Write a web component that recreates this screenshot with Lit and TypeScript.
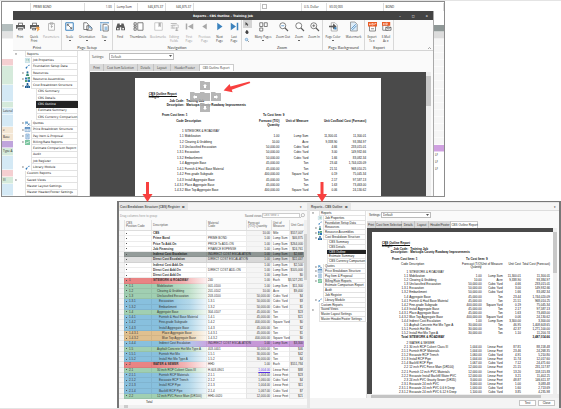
import { LitElement, html, css, svg, nothing } from "lit";
import { customElement, property } from "lit/decorators.js";
import { classMap } from "lit/directives/class-map.js";

const base = css`
  * { box-sizing: border-box; }
  button, select, input {
    appearance: none; border: 0; margin: 0; padding: 0; background: none;
    font: inherit; color: inherit; border-radius: 0; min-width: 0;
  }
  svg { display: block; overflow: visible; }
`;

/* ---------- icons ---------- */
const G = "#5a5a5a";
const B = "#3b82bd";
const icons: Record<string, unknown> = {
  print: svg`<path d="M3 1h6v3H3z M0 4h12v5H10V7H2v2H0z M3 8h6v3H3z" fill=${G}/><path d="M4 2h4v2H4z M4 9h4v1H4z" fill="#fff"/>`,
  quick: svg`<path d="M3 1h6v3H3z M0 4h12v5H10V7H2v2H0z M3 8h5v3H3z" fill=${G}/><path d="M4 2h4v2H4z M4 9h3v1H4z" fill="#fff"/><path d="M9 6l4 1-1 2 1 1-4 3 1-3-2-1z" fill="#f0a04b"/>`,
  params: svg`<path d="M2 2h8v9H2z M4 1h4v2H4z" fill="none" stroke="#aaa"/><path d="M6 4v4M5 6h3" stroke="#aaa"/>`,
  scale: svg`<path d="M1 1h10v10H1z" fill="#fff" stroke=${B} stroke-width="1.3"/><path d="M3 3l6 6M3 3h2.5M3 3v2.5M9 9H6.500M9 9V6.500" stroke=${G} fill="none"/>`,
  orient: svg`<path d="M1 1h4l2 2v7H1z M5 5h4l3 3v3H5z" fill="#fff" stroke=${G}/><path d="M9 5v3h3" fill="none" stroke=${B}/>`,
  size: svg`<path d="M1 1h10M1 0v2M11 0v2M1 3v8M0 11h2" stroke=${B}/><path d="M4 3h5l2 2v7H4z" fill="#fff" stroke=${G}/><path d="M6 6h4v5H6z" fill="#9cc3e2"/>`,
  find: svg`<path d="M2 2h3v2h2V2h3l2 6v3H7V7H5v4H0V8z" fill=${G}/><path d="M1.500 8h2v2h-2z M8.500 8h2v2h-2z" fill="#fff"/>`,
  thumbs: svg`<path d="M0 1h3v3H0z M0 5h3v2H0z M0 8h3v3H0z" fill="none" stroke=${G}/><path d="M5 1h7v10H5z" fill="#fff" stroke=${G}/>`,
  marks: svg`<path d="M1 1h10v10H1z" fill="#fff" stroke="#bbb"/><path d="M6 1h3v6L7.500 5.500 6 7z" fill="#aaa"/>`,
  fields: svg`<path d="M1 2h8M1 5h6M1 8h5" stroke="#aaa"/><path d="M3 4h8v4H3z" fill="none" stroke="#bbb"/><path d="M9 7v5M7 11h4" stroke="#999"/>`,
  first: svg`<path d="M2 2v8" stroke="#aaa" stroke-width="2"/><path d="M11 2v8L4 6z" fill="#aaa"/>`,
  prev: svg`<path d="M9 2v8L3 6z" fill="#a6a6a6"/>`,
  next: svg`<path d="M3 1v10l7-5z" fill=${B}/>`,
  last: svg`<path d="M1 1v10l7-5z M9 1h2v10H9z" fill=${B}/>`,
  pages: svg`<path d="M1 1h4v5H1z M7 1h4v5H7z M1 8h4v4H1z" fill="#fff" stroke=${G}/>`,
  zout: svg`<circle cx="5" cy="5" r="4" fill="#fff" stroke=${G}/><path d="M8 8l4 4" stroke=${G} stroke-width="1.500"/><path d="M3 5h4" stroke=${B}/>`,
  zoom: svg`<circle cx="5" cy="5" r="4" fill="#fff" stroke=${G}/><path d="M8 8l4 4" stroke=${G} stroke-width="1.500"/>`,
  zin: svg`<circle cx="5" cy="5" r="4" fill="#fff" stroke=${G}/><path d="M8 8l4 4" stroke=${G} stroke-width="1.500"/><path d="M3 5h4M5 3v4" stroke=${G}/>`,
  color: svg`<path d="M3 1h5l3 3v8H3z" fill="#fff" stroke="#999"/><path d="M0 5h5l1-3 4 4-4 4-1-3H0z" fill=${G}/><path d="M7 7h3v3H7z" fill=${B}/>`,
  water: svg`<path d="M2 0h6l3 3v9H2z" fill="#dcebf7" stroke="#888"/><path d="M3 9l6-6M4 11l6-6" stroke=${B}/>`,
  pdf: svg`<path d="M2 4h8v8H2z" fill="#fff" stroke="#666"/><path d="M0 0h12v6H0z" fill="#ea5b24"/><path d="M2 2v2h1V2M5 2v2h2V2zM9 4V2h2" fill="none" stroke="#fff" stroke-width=".8"/><path d="M4 9h4" stroke="#666"/>`,
  mail: svg`<path d="M1 4h7v7H1z" fill="#fff" stroke="#666"/><path d="M0 0h11v5H0z" fill="#ea5b24"/><path d="M2 1.500v2h1v-2M5 1.500v2h2v-2z" fill="none" stroke="#fff" stroke-width=".8"/><path d="M5 7h7v4H5z" fill="#fff" stroke=${G}/><path d="M5 7l3.500 2L12 7" fill="none" stroke=${G}/>`,
  job: svg`<path d="M1 1h10v10H1z" fill="#fff" stroke="#7ab5c8"/><path d="M3 4h2M6 4h4M3 7h2M6 7h4" stroke="#46917d" stroke-width="1.500"/>`,
  tool: svg`<path d="M1 9l3-3 2 2-3 4z M8 3l2-2 1 3-2 1z" fill="#2f77b8"/><path d="M4 8l5-5" stroke="#2f77b8"/>`,
  person: svg`<circle cx="6" cy="3" r="2.500" fill="#2b6f9f"/><path d="M2 12l2-6h4l2 6z" fill="#3c8c7a"/>`,
  boxes: svg`<path d="M0 1h5v5H0z M6 6h6v6H6z" fill="#2f77b8"/><path d="M6 0h6v5H6z M0 7h5v5H0z" fill="#55a077"/>`,
  org: svg`<path d="M4 0h4v5H4z M0 7h4v5H0z M4.500 7h3v5h-3z M8 7h4v5H8z" fill="#1f5e95"/><path d="M2 6h8" stroke="#1f5e95" stroke-width="1.500"/>`,
  quote: svg`<path d="M0 1h7v5H4L1 9z" fill="#6fa5cf"/><path d="M6 5l6 6M6 11l5-5" stroke="#1f5e95" stroke-width="1.500"/>`,
  grid: svg`<path d="M0 1h12v10H0z" fill="#fff" stroke="#2f6fae"/><path d="M0 1h12v3H0z" fill="#2f6fae"/><path d="M4 4v7M8 4v7M0 7h12" stroke="#7ba7d0"/>`,
  doc: svg`<path d="M2 0h8v12H2z" fill="#d6e6f5" stroke="#2f6fae"/><path d="M4 4h4M4 7h4" stroke="#2f6fae"/>`,
  bill: svg`<path d="M0 0h12v12H0z" fill="#7cc5a0"/><path d="M2 9l3-4 2 2 4-5" stroke="#fff" fill="none" stroke-width="1.500"/>`,
};
const icon = (n: string) => html`<svg class="ico" viewBox="0 0 12 12" aria-hidden="true">${icons[n]}</svg>`;

/* ---------- report tree ---------- */
type Node = [label: string, level: number, icon?: string, mark?: string];
const nodes: Node[] = [
  ["Reports", 0, "", "open"],
  ["Job Properties", 1, "job"],
  ["Foundation Setup Data", 1, "tool"],
  ["Resources", 1, "person", "closed"],
  ["Resource Assemblies", 1, "boxes", "closed"],
  ["Cost Breakdown Structure", 1, "org", "open"],
  ["CBS Summary", 2],
  ["CBS Details", 2],
  ["CBS Outline", 2],
  ["Estimate Summary", 2],
  ["CBS Currency Comparison", 2],
  ["Quotes", 1, "quote", "closed"],
  ["Price Breakdown Structure", 1, "grid", "closed"],
  ["Pay Item & Proposal", 1, "doc", "closed"],
  ["Billing/Rate Reports", 1, "bill", "closed"],
  ["Estimate Comparison Report", 1],
  ["Audit", 1],
  ["Job Register", 1],
  ["Library Module", 1, "tool", "closed"],
  ["Custom Reports", 0],
  ["Saved Views", 0, "", "closed"],
  ["Master Layout Settings", 0],
  ["Master Header/Footer Settings", 0],
];

@customElement("report-tree")
export class ReportTree extends LitElement {
  static styles = [base, css`
    :host { display: flex; flex-direction: column; min-height: 0; background: #fff; padding-right: var(--tree-end); }
    .row { flex: 1 1 0; min-height: 0; display: flex; align-items: stretch; text-align: left; width: 100%; }
    .gutter { flex: none; display: flex; align-items: center; justify-content: flex-end; gap: 1px; padding-right: 1px; }
    .l0 { width: var(--l0); justify-content: flex-start; padding-left: 2px; }
    .l1 { width: var(--l1); }
    .l2 { width: var(--l2); }
    .ico { width: var(--tree-icon); height: var(--tree-icon); }
    .mark { width: 2px; height: 2px; }
    .label { flex: 1; display: flex; align-items: center; padding-left: 1px; border: solid #e2e2e2; border-width: 0 1px 1px; line-height: 4px; white-space: nowrap; }
    .on { background: #222; color: #fff; border-color: #222; }
  `];
  render() {
    return nodes.map(([label, level, ic, mark]) => html`
      <button class="row">
        <span class="gutter l${level}">
          ${mark ? html`<svg class="mark" viewBox="0 0 4 4"><path d=${mark === "open" ? "M0 1h4L2 4z" : "M1 0v4l3-2z"} fill="#666"/></svg>` : nothing}
          ${ic ? icon(ic) : nothing}
        </span>
        <span class=${classMap({ label: true, on: label === "CBS Outline" })}>${label}</span>
      </button>`);
  }
}

/* ---------- printed report ---------- */
type Line = string[];
const lines: Line[] = [
  ["1", "SITEWORK & ROADWAY"],
  ["1.1", "Mobilization", "1.00", "Lump Sum", "11,300.01", "11,300.01"],
  ["1.2", "Clearing & Grubbing", "10.00", "Acre", "9,338.90", "93,384.97"],
  ["1.3", "Unclassified Excavation", "50,000.00", "Cubic Yard", "4.66", "233,015.01"],
  ["1.3.1", "Excavation", "50,000.00", "Cubic Yard", "3.00", "149,932.66"],
  ["1.3.2", "Embankment", "50,000.00", "Cubic Yard", "1.66", "83,082.34"],
  ["1.4", "Aggregate Base", "45,000.00", "Ton", "23.44", "1,744,020.09"],
  ["1.4.1", "Furnish & Haul Base Material", "45,000.00", "Ton", "21.51", "968,010.25"],
  ["1.4.2", "Fine-grade Subgrade", "400,000.00", "Square Yard", "0.19", "75,045.34"],
  ["1.4.3", "Install Aggregate Base", "45,000.00", "Ton", "2.17", "97,587.13"],
  ["1.4.3.1", "Place Aggregate Base", "45,000.00", "Ton", "1.63", "73,463.00"],
  ["1.4.3.2", "Blue Top Aggregate Base", "400,000.00", "Square Yard", "0.06", "24,130.62"],
  ["1.4.4", "Indirect Cost Escalation", "1.00", "Lump Sum", "3,300.00", "3,300.00"],
  ["1.5", "Asphalt Concrete Hot Mix Type A", "30,000.00", "Ton", "46.95", "1,408,603.65"],
  ["1.5.1", "Furnish Hot Mix", "30,000.00", "Ton", "42.37", "1,271,100.00"],
  ["1.5.2", "Install Hot Mix Type A", "30,000.00", "Ton", "1.10", "11,200.74"],
  ["Total", "SITEWORK & ROADWAY", "", "", "", "3,487,014.66"],
  ["2", "WATER & SEWER"],
  ["2.1", "30 inch RCP Culvert Class III", "1,004.00", "Linear Feet", "87.81", "88,158.48"],
  ["2.1.1", "Furnish RCP Materials", "1,004.00", "Linear Feet", "23.46", "24,268.35"],
  ["2.1.2", "Excavate RCP Trench", "1,060.00", "Cubic Yard", "4.91", "5,210.80"],
  ["2.1.3", "Install RCP Pipe", "1,004.00", "Linear Feet", "11.74", "12,017.60"],
  ["2.1.4", "Backfill RCP Pipe", "1,067.00", "Cubic Yard", "7.12", "24,471.60"],
  ["2.2", "12 inch PVC Force Main (DR100)", "12,000.00", "Linear Feet", "21.15", "231,117.87"],
  ["2.2.1", "Furnish 12 inch PVC Materials", "12,000.00", "Linear Feet", "13.20", "158,115.83"],
  ["2.2.2", "Excavate Install Backfill Water PVC", "12,000.00", "Linear Feet", "3.21", "11,402.21"],
  ["2.3", "24 inch PVC Gravity Sewer (DR35)", "3,000.00", "Linear Feet", "48.87", "146,611.37"],
  ["2.3.1", "Excavate 24 inch PVC", "3,000.00", "Linear Feet", "1.00", "3,083.48"],
  ["2.3.1.1", "Excavate 24 inch PVC 0-6 ft Deep", "1,000.00", "Cubic Yard", "1.60", "2,713.69"],
  ["2.3.1.2", "Excavate 24 inch PVC 6-12 ft Deep", "1,100.00", "Cubic Yard", "3.85", "4,235.98"],
];

@customElement("report-page")
export class ReportPage extends LitElement {
  @property({ type: Number }) count = lines.length;
  static styles = [base, css`
    :host { display: flex; flex-direction: column; min-height: 0; overflow: hidden; background: #fff; color: #111; padding: var(--rp-top) 0 var(--rp-end); white-space: nowrap; font-family: var(--report-font); }
    h2, p { margin: 0; font-size: 3px; line-height: 3px; padding-left: var(--rp-left); font-weight: 700; }
    h2 { text-decoration: underline; }
    .meta, .range { display: grid; line-height: var(--rp-line); font-weight: 700; }
    .meta { grid-template-columns: 20fr 79fr; column-gap: 2px; }
    .meta .k { display: flex; justify-content: flex-end; }
    .range { grid-template-columns: 11fr 41fr 48fr; margin-top: var(--rp-gap); }
    .range, table { font-family: "Liberation Sans Narrow", "Liberation Sans", sans-serif; }
    table { flex: 1 1 0; min-height: 0; display: flex; flex-direction: column; margin-top: 2px; }
    tbody { flex: 1 1 0; min-height: 0; display: flex; flex-direction: column; }
    tr { display: grid; grid-template-columns: var(--rp-cols); }
    thead tr { line-height: var(--rp-line); margin-bottom: 1px; }
    th { font-weight: var(--rp-head); }
    tbody tr { flex: 10 1 0; min-height: 0; align-items: center; line-height: 4px; }
    tbody tr.gap { flex-grow: 14; align-items: end; }
    th, td { display: flex; justify-content: flex-end; min-width: 0; padding: 0; text-align: right; }
    .d { justify-content: flex-start; padding-left: 1px; }
    .total { font-weight: 700; }
  `];
  render() {
    return html`
      <h2>CBS Outline Report</h2><p>InSight</p>
      <div class="meta"><span class="k">Job Code:</span><span>Training Job</span>
        <span class="k">Description:</span><span>Maricopa County Roadway Improvements</span></div>
      <div class="range"><span></span><span>From Cost Item: 1</span><span>To Cost Item: 9</span></div>
      <table>
        <thead><tr><th>Code</th><th class="d">Description</th><th>Forecast (T/O)<br>Quantity</th><th>Unit of Measure</th><th>Unit Cost</th><th>Total Cost (Forecast)</th></tr></thead>
        <tbody>${lines.slice(0, this.count).map((l) => html`
          <tr class=${classMap({ total: l[0] === "Total", gap: l[0] === "2" })}>
            ${[0, 1, 2, 3, 4, 5].map((i) => html`<td class=${i === 1 ? "d" : ""}>${l[i] ?? ""}</td>`)}
          </tr>`)}
        </tbody>
      </table>`;
  }
}

/* ---------- settings, tabs and viewer ---------- */
@customElement("report-view")
export class ReportView extends LitElement {
  @property({ type: Number }) count = lines.length;
  @property({ type: Boolean }) wide = false;
  static styles = [base, css`
    :host { display: flex; flex-direction: column; min-width: 0; min-height: 0; background: #fafafa; }
    .set { display: grid; grid-template-columns: var(--set-cols); align-items: center; height: var(--set-h); color: #333; }
    .set label { padding-left: 2px; }
    .pick { position: relative; height: var(--pick-h); }
    select { display: block; width: 100%; height: 100%; border: 1px solid #bbb; background: #fff; padding-left: 1px; line-height: 4px; }
    .pick svg { position: absolute; right: 2px; top: 2px; width: 3px; height: 2px; }
    .tabs { display: grid; grid-template-columns: var(--tab-cols); height: 7px; margin-top: var(--tab-gap); white-space: nowrap; color: #333; }
    .tabs button { background: #dadada; border-right: 1px solid #c2c2c2; text-align: center; line-height: 4px; }
    .tabs .on { background: #fff; border: solid #ccc; border-width: 1px 1px 0 0; }
    .view { min-height: 0; display: grid; grid-template-columns: var(--view-cols); background: #4a4a4a; padding-top: var(--view-top); }
    .wrap { flex: 1; min-height: 0; display: grid; grid-template-columns: minmax(0, 1fr) var(--bar) 2px; margin-top: var(--view-gap); }
    .vs { background: #eee; padding: 4px 0 0; }
    .vs i { display: block; height: 25%; background: #c8c8c8; }
    .hs { height: 4px; background: #eee; padding: 1px 18px 0 4px; }
    .hs i { display: block; height: 3px; background: #c4c4c4; }
  `];
  render() {
    return html`
      <div class="set"><label for="s">Settings:</label>
        <div class="pick"><select id="s"><option>Default</option></select>
          <svg viewBox="0 0 6 4"><path d="M0 0h6L3 4z" fill="#555"/></svg></div></div>
      <div class="tabs">
        ${["Print", "Cost Item Selection", "Details", "Layout", "Header/Footer", "CBS Outline Report"].map(
          (t, i) => html`<button class=${i === 5 ? "on" : ""}>${t}</button>`)}
      </div>
      <div class="wrap">
        <div class="view"><span></span><report-page .count=${this.count}></report-page><span></span></div>
        <div class="vs"><i></i></div>
      </div>
      ${this.wide ? html`<div class="hs"><i></i></div>` : nothing}`;
  }
}

/* ---------- cost breakdown register ---------- */
type Cost = [kind: string, pos: string, text: string, code: string, qty: string, unit: string, cost: string, depth?: number];
const costs: Cost[] = [
  ["", "", "CBS", "", "10.00", "Mile", "$557,007"],
  ["", "", "Prime Bond", "PRIME BOND", "1.00", "Lump Sum", "$46,875"],
  ["", "", "Price To Add-On", "PRICE To ADD-ON", "1.00", "Lump Sum", "$264,000"],
  ["", "", "Job Financing", "FINANCE EXPENSE", "1.00", "Lump Sum", "$24,761"],
  ["dark", "", "Indirect Cost Escalation", "INDIRECT COST ESCALATION", "1.00", "Lump Sum", "$2,668"],
  ["light", "", "Direct Cost Escalation", "DIRECT COST ESCALATION", "1.00", "Lump Sum", "$22,447"],
  ["", "", "Indirect Cost Add-On", "", "1.00", "Lump Sum", "$2,500"],
  ["", "", "Direct Cost Add-On", "DIRECT COST ADD-ON", "1.00", "Lump Sum", "$105,000"],
  ["", "", "Direct Cost Add-On", "", "1.00", "Lump Sum", "$0"],
  ["red", "1", "SITEWORK & ROADWAY", "240", "1.00", "Each", "$3,527,281"],
  ["green", "1.1", "Mobilization", "001-0100", "1.00", "Lump Sum", "$11,300", 1],
  ["green", "1.2", "Clearing & Grubbing", "201-0102", "10.00", "Acre", "$9,400", 1],
  ["green", "1.3", "Unclassified Excavation", "203-0100", "50,000.00", "Cubic Yard", "$4", 1],
  ["blue", "1.3.1", "Excavation", "1.3.1", "50,000.00", "Cubic Yard", "$3", 2],
  ["blue", "1.3.2", "Embankment", "1.3.2", "50,000.00", "Cubic Yard", "$1", 2],
  ["green", "1.4", "Aggregate Base", "304-0107", "45,000.00", "Ton", "$23", 1],
  ["blue", "1.4.1", "Furnish & Haul Base Material", "1.4.1", "45,000.00", "Ton", "$21", 2],
  ["blue", "1.4.2", "Fine-grade Subgrade", "1.4.2", "400,000.00", "Square Yard", "$0", 2],
  ["blue", "1.4.3", "Install Aggregate Base", "1.4.3", "45,000.00", "Ton", "$2", 2],
  ["tan", "1.4.3.1", "Place Aggregate Base", "1.4.3.1", "45,000.00", "Ton", "$1", 3],
  ["tan", "1.4.3.2", "Blue Top Aggregate Base", "1.4.3.2", "400,000.00", "Square Yard", "$0", 3],
  ["purple", "1.4.4", "Indirect Cost Escalation", "INDIRECT COST ESCALATION", "1.00", "Lump Sum", "$3,300", 2],
  ["green", "1.5", "Asphalt Concrete Hot Mix Type A", "403-0401", "30,000.00", "Ton", "$46", 1],
  ["blue", "1.5.1", "Furnish Hot Mix", "1.5.1", "30,000.00", "Ton", "$42", 2],
  ["blue", "1.5.2", "Install Hot Mix Type A", "1.5.2", "30,000.00", "Ton", "$4", 2],
  ["red", "2", "WATER & SEWER", "HHD", "1.00", "Each", "$551,784"],
  ["green", "2.1", "30 inch RCP Culvert Class III", "H-603-0901", "1,004.00", "Linear Feet", "$88", 1],
  ["blue", "2.1.1", "Furnish RCP Materials", "2.1.1", "1,004.00", "Linear Feet", "$23", 2],
  ["blue", "2.1.2", "Excavate RCP Trench", "2.1.2", "1,060.00", "Cubic Yard", "$4", 2],
  ["blue", "2.1.3", "Install RCP Pipe", "2.1.3", "1,004.00", "Linear Feet", "$11", 2],
  ["blue", "2.1.4", "Backfill RCP Pipe", "2.1.4", "1,067.00", "Cubic Yard", "$7", 2],
  ["green", "2.2", "12 inch PVC Force Main (DR100)", "HHD-0020", "12,000.00", "Linear Feet", "$21", 1],
];

@customElement("cost-register")
export class CostRegister extends LitElement {
  static styles = [base, css`
    :host { display: flex; flex-direction: column; min-width: 0; min-height: 0; background: #fff; white-space: nowrap; }
    .tab { height: 8px; flex: none; display: flex; align-items: center; justify-content: space-between; background: #f4f4f4; border-bottom: 1px solid #ddd; padding-right: 5px; }
    .tab button { background: #e6e6e6; height: 7px; padding: 0 3px 0 1px; font-weight: 700; color: #555; line-height: 4px; }
    .find { height: 9px; flex: none; display: grid; grid-template-columns: 127fr 17fr 38fr 7fr; align-items: center; background: #fafafa; color: #666; }
    .find .hint { color: #999; padding-left: 1px; }
    select { height: 5px; border: 1px solid #ccc; background: #fff; line-height: 3px; color: #888; width: 100%; }
    .find svg { width: 5px; height: 5px; }
    .wrap { flex: 1; min-height: 0; display: grid; grid-template-columns: minmax(0, 1fr) 3px; }
    table { min-height: 0; display: flex; flex-direction: column; }
    tr { display: grid; grid-template-columns: 5fr 27fr 55fr 40fr 25fr 18fr 15fr; }
    thead tr { height: 11px; background: #fafafa; color: #555; line-height: 3px; align-items: center; border-bottom: 1px solid #ddd; }
    tbody { flex: 1 1 0; min-height: 0; display: flex; flex-direction: column; }
    tbody tr { flex: 1 1 0; min-height: 0; color: #333; background-repeat: no-repeat; background-size: 47% 100%; background-position: 5% 0; }
    th, td { display: flex; align-items: center; padding: 0 1px; min-width: 0; line-height: 4px; font-weight: 400; text-align: left; }
    thead th { line-height: 3px; height: 100%; border-left: 1px solid #e4e4e4; }
    td { border: solid #ececec; border-width: 0 0 1px 1px; }
    tr[class] td { border-color: #0000000f; }
    .mark { border-left: 0; background: #f5f5f5; }
    .n { justify-content: flex-end; }
    td.q, td.c { background: #0000000a; }
    .pos { gap: 2px; }
    .pos i { width: 1px; height: 1px; background: #555; }
    .b { font-weight: 700; }
    .d1 { padding-left: 5px; } .d2 { padding-left: 7px; } .d3 { padding-left: 10px; }
    .dark { background: #949c9a; } .dark td { color: #222; }
    .light { background: #e0e0e0; }
    .red { background-image: linear-gradient(90deg, #e98484 0 35%, #f3b4b4 70%, #fff); }
    .green { background-image: linear-gradient(90deg, #a0cfb2 0 45%, #bfe0ca 75%, #fff); }
    .blue { background-image: linear-gradient(90deg, #88c0de 0 45%, #b3d8ea 75%, #fff); }
    .tan { background-image: linear-gradient(90deg, #e0c08f 0 45%, #ecd7b6 75%, #fff); }
    .purple { background-color: #cf9fe0; background-image: linear-gradient(90deg, #88c0de 0 45%, #b3c6ea 75%, #cf9fe0); }
    .link { color: #5a2fe0; text-decoration: underline; }
    .vs { background: #f0f0f0; padding-top: 14px; }
    .vs i { display: block; height: 28%; background: #d0d0d0; }
    .sum { height: 6px; flex: none; background: #fafafa; padding-left: 27px; line-height: 6px; }
    .hs { height: 3px; flex: none; background: #f0f0f0; padding-left: 5px; }
    .hs i { display: block; width: 4px; height: 3px; background: #ccc; }
  `];
  render() {
    return html`
      <div class="tab"><button>Cost Breakdown Structure (CBS) Register &nbsp; ⊠</button><span>▾</span></div>
      <div class="find"><span class="hint">Drag columns here to group</span><label for="v">Saved views:</label>
        <select id="v"><option>CBS view 1</option></select>
        <svg viewBox="0 0 12 12"><circle cx="7" cy="5" r="4" fill="none" stroke="#777"/><path d="M4 8l-4 4" stroke="#777"/></svg></div>
      <div class="wrap">
        <table>
          <thead><tr><th></th><th>CBS<br>Position Code</th><th>Description</th><th>Material<br>Code</th><th>Forecast<br>(T/O) Quantity</th><th>Unit of<br>Measure</th><th>Unit Cost</th></tr></thead>
          <tbody>${costs.map(([kind, pos, text, code, qty, unit, cost, depth = 0]) => html`
            <tr class=${kind || nothing}>
              <td class="mark"></td><td class="pos"><i></i>${pos}</td>
              <td class=${classMap({ b: !depth, ["d" + depth]: true })}>${text}</td>
              <td>${code}</td>
              <td class="n q"><span class=${pos === "2.1" ? "link" : ""}>${qty}</span></td>
              <td>${unit}</td><td class="n c">${cost}</td>
            </tr>`)}
          </tbody>
        </table>
        <div class="vs"><i></i></div>
      </div>
      <div class="sum">Total</div>
      <div class="hs"><i></i></div>`;
  }
}

/* ---------- ribbon ---------- */
type Cmd = [label: string, icon: string, width: number, drop?: boolean];
const groups: [string, Cmd[]][] = [
  ["Print", [["Print", "print", 14], ["Quick Print", "quick", 14], ["Parameters", "params", 20]]],
  ["Page Setup", [["Scale", "scale", 15, true], ["Orientation", "orient", 20, true], ["Size", "size", 15, true]]],
  ["Navigation", [["Find", "find", 14], ["Thumbnails", "thumbs", 22], ["Bookmarks", "marks", 18], ["Editing Fields", "fields", 14], ["First Page", "first", 16], ["Previous Page", "prev", 15], ["Next Page", "next", 15], ["Last Page", "last", 14]]],
  ["Zoom", [["Many Pages", "pages", 22, true], ["Zoom Out", "zout", 18], ["Zoom", "zoom", 14, true], ["Zoom In", "zin", 16]]],
  ["Page Background", [["Page Color", "color", 20, true], ["Watermark", "water", 21]]],
  ["Export", [["Export To", "pdf", 14, true], ["E-Mail As", "mail", 14, true]]],
];
const wraps = new Set(["Quick Print", "Editing Fields", "First Page", "Previous Page", "Next Page", "Last Page", "Export To", "E-Mail As"]);
const greyed = new Set(["Parameters", "Bookmarks", "Editing Fields", "First Page", "Previous Page"]);

@customElement("ribbon-bar")
export class RibbonBar extends LitElement {
  static styles = [base, css`
    :host { display: flex; height: 31px; flex: none; background: #fafafa; border-bottom: 1px solid #d4d4d4; color: #333; }
    .group { display: flex; flex-direction: column; justify-content: space-between; border-right: 1px solid #d8d8d8; flex: none; }
    .cmds { display: flex; }
    .cmd { display: flex; flex-direction: column; align-items: center; padding-top: 2px; line-height: 4px; text-align: center; flex: none; white-space: nowrap; }
    .cmd .ico { width: 9px; height: 9px; margin-bottom: 4px; }
    .cmd.off { color: #999; }
    .drop { width: 2px; height: 1px; background: #666; margin-top: 1px; }
    .cap { text-align: center; font: 4px/5px Lato, sans-serif; color: #444; white-space: nowrap; }
    .tools { width: 10px; display: flex; flex-direction: column; align-items: center; }
    .tools button { width: 9px; height: 8px; display: grid; place-items: center; }
    .tools .on { background: #d4d4d4; }
    .tools svg { width: 4px; height: 4px; }
    .fold { margin: auto 2px 1px auto; width: 3px; height: 2px; }
  `];
  render() {
    return [groups.map(([name, cmds]) => html`
      <div class="group">
        <div class="cmds">
          ${name === "Zoom" ? html`<div class="tools">
            <button class="on" aria-label="Pointer"><svg viewBox="0 0 8 8"><path d="M1 0v7l2-2 2 3 1-1-1-2h2z" fill="#444"/></svg></button>
            <button aria-label="Hand"><svg viewBox="0 0 8 8"><path d="M1 3h1V1h1v2-3h1v3-2h2v2h1v3L5 8H3L0 4z" fill="#444"/></svg></button>
            <button aria-label="Magnifier"><svg viewBox="0 0 8 8"><circle cx="3" cy="3" r="2.500" fill="#cfe3f4" stroke="#3b82bd"/><path d="M5 5l3 3" stroke="#444"/></svg></button>
          </div>` : nothing}
          ${cmds.map(([label, ic, w, drop]) => html`
            <button class=${classMap({ cmd: true, off: greyed.has(label) })} style="width:${w}px">
              ${icon(ic)}
              <span>${wraps.has(label) ? html`${label.split(" ")[0]}<br>${label.split(" ")[1]}${drop ? " ▾" : ""}` : label}</span>
              ${drop && !wraps.has(label) ? html`<span class="drop"></span>` : nothing}
            </button>`)}
        </div>
        <div class="cap">${name}</div>
      </div>`), html`<svg class="fold" viewBox="0 0 6 4"><path d="M0 4l3-3 3 3" fill="none" stroke="#555"/></svg>`];
  }
}

/* ---------- page ---------- */
type Stripe = [color: string, size: number, text?: string];
const leftStripe: Stripe[] = [
  ["#fff", 14], ["#b4bebe", 7], ["#e3e3e3", 7], ["#fff", 21], ["#f4cfd1", 7], ["#d5eadb", 21],
  ["#d4e9f5", 17], ["#d5eadb", 6], ["#d4e9f5", 7, "Lateral"], ["#d4e9f5", 12], ["#f3e6d4", 7, "e"], ["#f3e6d4", 7, "Base"], ["#bfa4dc", 7],
  ["#d5eadb", 7, "Type A"], ["#d4e9f5", 15], ["#f4cfd1", 7], ["#d5eadb", 7, "III"], ["#d4e9f5", 12],
];
const rightStripe: Stripe[] = [
  ["#fff", 7], ["#fff", 7], ["#8f9897", 7], ["#dcdcdc", 7],
  ...Array.from({ length: 15 }, (): Stripe => ["#f6f6f6", 7]),
  ["#cfa0e0", 7], ["#fff", 7, "LF"], ["#fff", 7, "LF"], ["#fff", 7, "LF"], ["#fff", 7], ["#fff", 7], ["#fff", 9],
];
const stripe = (list: Stripe[]) => html`<div class="stripe">${list.map(([c, h, t]) => html`<span style="background:${c};flex-grow:${h}">${t ?? ""}</span>`)}</div>`;
const folder = (x: number, y: number, d: string) => svg`
  <path d="M${x} ${y}h4l1 1h5v8h-10z" fill="#a9a9a9" fill-opacity=".85"/><path d=${d} transform="translate(${x + 5} ${y + 5})" fill="#fff"/>`;

@customElement("app-root")
export class AppRoot extends LitElement {
  static styles = [base, css`
    :host {
      box-sizing: border-box; display: grid; position: relative; height: 100vh; overflow: hidden; background: #fff;
      border: solid #e4e4e4; border-width: 1px 0;
      grid-template-columns: minmax(0, 117fr) minmax(0, 328fr) minmax(0, 116fr);
      grid-template-rows: minmax(0, 196fr) minmax(0, 4fr) minmax(0, 207fr);
      font: 3px/4px "Open Sans", "Noto Sans", sans-serif; color: #222;
    }
    .top { grid-area: 1 / 1 / 2 / 3; margin-left: 1px; border: 1px solid #8c8c8c; display: grid; grid-template: 9px minmax(0, 1fr) / 11px minmax(0, 1fr) 10px; background: #fff; overflow: hidden;
      --l0: 12px; --l1: 18px; --l2: 23px; --tree-icon: 5px; --tree-end: 11px;
      --rp-top: 15px; --rp-end: 3px; --rp-left: 14px; --rp-line: 4px; --rp-gap: 6px; --rp-head: 700; --rp-cols: 49fr 58fr 38fr 29fr 29fr 29fr 15fr; --report-font: "Liberation Sans", sans-serif;
      --set-cols: 19fr 65fr 260fr; --set-h: 11px; --pick-h: 7px; --tab-gap: 2px; --tab-cols: 14fr 34fr 16fr 17fr 29fr 34fr 200fr;
      --view-cols: 45fr 247fr 45fr; --view-top: 6px; --view-gap: 1px; --bar: 5px; }
    .behind { grid-column: 1 / 4; display: grid; grid-template-columns: 29fr 53fr 30fr 23fr 28fr 28fr 66fr 8fr 33fr 25fr 56fr 60fr; background: #fff; align-items: end; line-height: 8px; padding-top: 1px; }
    .behind span { border-right: 1px solid #ddd; padding: 0 2px; height: 8px; white-space: nowrap; }
    .behind .r { text-align: right; }
    .behind input { border: 1px solid #bbb; width: 5px; height: 5px; margin: 0 1px 2px; }
    .stripe { display: flex; flex-direction: column; min-height: 0; }
    .stripe span { flex: 1 1 0; border: solid #fff8; border-width: 0 0 1px; white-space: nowrap; line-height: 6px; padding-left: 1px; }
    .window { display: flex; flex-direction: column; min-width: 0; min-height: 0; border-right: 1px solid #aaa; }
    .title { height: 9px; flex: none; display: grid; grid-template-columns: 1fr auto 1fr; align-items: center; background: #434343; color: #fff; font-weight: 700; }
    .title, .body report-tree { font-family: "DejaVu Sans", sans-serif; }
    .title .btns { display: flex; justify-content: flex-end; gap: 11px; padding-right: 5px; }
    .body { flex: 1; min-height: 0; display: grid; grid-template-columns: minmax(0, 76fr) minmax(0, 344fr); }
    .body report-view { border-left: 1px solid #ddd; }

    .bottom { grid-area: 3 / 2 / 4 / 4; border: solid #777; border-width: 1px 2px 0; display: grid; grid-template-columns: minmax(0, 188fr) 3px minmax(0, 249fr); background: #e6e6e6; padding-top: 1px;
      font-family: "Liberation Sans Narrow", "Liberation Sans", sans-serif;
      --l0: 9px; --l1: 13px; --l2: 17px; --tree-icon: 4px; --tree-end: 8px;
      --rp-top: 10px; --rp-end: 0px; --rp-left: 10px; --rp-line: 3px; --rp-gap: 4px; --rp-head: 400; --rp-cols: 36fr 45fr 28fr 21fr 18fr 29fr 3fr; --report-font: "Liberation Sans Narrow", "Liberation Sans", sans-serif;
      --set-cols: 14fr 50fr 127fr; --set-h: 8px; --pick-h: 6px; --tab-gap: 2px; --tab-cols: 9fr 26fr 13fr 14fr 22fr 26fr 81fr;
      --view-cols: 5fr 181fr 0fr; --view-top: 4px; --view-gap: 0px; --bar: 4px; }
    .right { grid-column: 3; display: flex; flex-direction: column; min-height: 0; background: #f6f6f6; }
    .rtab { height: 8px; flex: none; display: flex; align-items: center; justify-content: space-between; border-bottom: 1px solid #ddd; padding-right: 3px; }
    .rtab button { background: #e6e6e6; height: 7px; padding: 0 3px 0 1px; font-weight: 700; color: #555; line-height: 4px; }
    .rbody { flex: 1; min-height: 0; display: grid; grid-template-columns: minmax(0, 57fr) minmax(0, 192fr); background: #fff; }
    .treebox { display: grid; grid-template-rows: minmax(0, 111fr) minmax(0, 76fr); min-height: 0; border-right: 1px solid #ddd; }
    .foot { height: 10px; flex: none; display: flex; justify-content: flex-end; align-items: center; gap: 2px; padding-right: 4px; background: #f4f4f4; }
    .foot button { width: 17px; height: 6px; border: 1px solid #c4c4c4; background: #fff; line-height: 4px; text-align: center; }
    .over { position: absolute; inset: 0; width: 100%; height: 100%; pointer-events: none; }
  `];
  render() {
    return html`
      <section class="top">
        <div class="behind"><span></span><span>PRIME BOND</span><span class="r">1.00</span><span>Lump Sum</span><span class="r">$46,875.37</span><span class="r">$46,875.37</span><span></span><input type="checkbox" aria-label="Locked"><span></span><span>U.S. Dollar</span><span>$0.00,000</span><span>BOND</span></div>
        ${stripe(leftStripe)}
        <div class="window">
          <div class="title"><span></span><span>Reports - CBS Outline - Training Job</span><span class="btns"><span>–</span><span>□</span><span>×</span></span></div>
          <ribbon-bar></ribbon-bar>
          <div class="body"><report-tree></report-tree><report-view .count=${12}></report-view></div>
        </div>
        ${stripe(rightStripe)}
      </section>
      <section class="bottom">
        <cost-register></cost-register>
        <div class="right">
          <div class="rtab"><button>Reports - CBS Outline &nbsp; ⊠</button><span>▾</span></div>
          <div class="rbody">
            <div class="treebox"><report-tree></report-tree></div>
            <report-view wide></report-view>
          </div>
          <div class="foot"><button>Test</button><button>Close</button></div>
        </div>
      </section>
      <svg class="over" viewBox="0 1 561 407" preserveAspectRatio="none" aria-hidden="true">
        ${folder(200, 81, "M-1 2V0h-1L0-2 2 0H1v2z")}
        ${folder(190, 92, "M2-1H0v-1L-2 0 0 2V1h2z")}
        ${folder(200, 92, "")}
        ${folder(211, 92, "M-2-1H0v-1L2 0 0 2V1h-2z")}
        ${folder(200, 103, "M-1-2V0h-1L0 2 2 0H1v-2z")}
        <g fill="#f8403f">
          <path d="M249.500 81.500l.8 1.600-18.600 6.700.9 2.400-9-1.800 6-6.300.9 2.500z"/>
          <path d="M146 182h3v12h3.500l-5 8-5-8h3.500z"/>
          <path d="M320.500 182h3v12h3.500l-5 8-5-8h3.500z"/>
        </g>
      </svg>`;
  }
}
